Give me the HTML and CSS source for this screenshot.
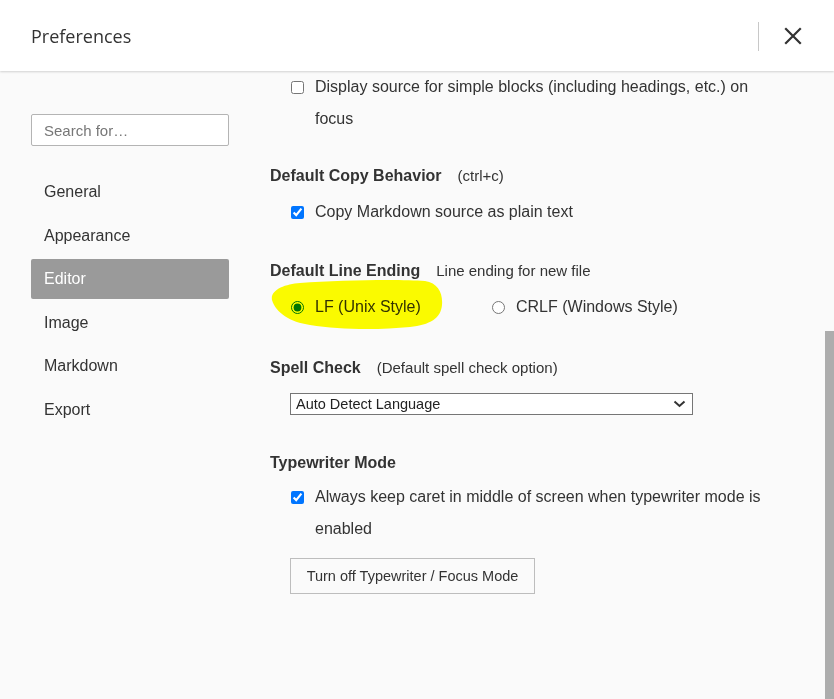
FILE: index.html
```html
<!DOCTYPE html>
<html lang="en">
<head>
<meta charset="utf-8">
<title>Preferences</title>
<link rel="stylesheet" href="styles.css">
</head>
<body>
<header class="topbar">
  <div class="title">Preferences</div>
  <div class="topbar-actions">
    <span class="divider"></span>
    <button class="close" aria-label="Close">
      <svg width="18" height="18" viewBox="0 0 18 18"><path d="M2 2 L16 16 M16 2 L2 16" stroke="#333" stroke-width="2.2" fill="none" stroke-linecap="square"/></svg>
    </button>
  </div>
</header>
<div class="main">
  <nav class="sidebar">
    <input class="search" type="text" placeholder="Search for…">
    <ul class="menu">
      <li class="menu-item">General</li>
      <li class="menu-item">Appearance</li>
      <li class="menu-item active">Editor</li>
      <li class="menu-item">Image</li>
      <li class="menu-item">Markdown</li>
      <li class="menu-item">Export</li>
    </ul>
  </nav>
  <div class="content">
    <div class="section first">
      <label class="row">
        <input type="checkbox" class="check">
        <span class="row-text">Display source for simple blocks (including headings, etc.) on focus</span>
      </label>
    </div>

    <div class="section section-sm">
      <div class="heading">Default Copy Behavior<span class="hint">(ctrl+c)</span></div>
      <label class="row">
        <input type="checkbox" class="check" checked>
        <span class="row-text">Copy Markdown source as plain text</span>
      </label>
    </div>

    <div class="section">
      <div class="heading">Default Line Ending<span class="hint">Line ending for new file</span></div>
      <div class="row radio-row">
        <label class="radio-label first-radio"><input type="radio" name="le" class="check" checked>LF (Unix Style)</label>
        <label class="radio-label"><input type="radio" name="le" class="check">CRLF (Windows Style)</label>
        <svg class="highlight" width="176" height="56" viewBox="0 0 176 56"><path d="M2 22 C0 12 15 6 30 5 C70 2 130 1 155 3 C168 5 173 15 172 27 C171 40 160 47 140 49 C110 52 70 52 40 47 C20 44 6 35 2 22 Z" fill="#ffff00"/></svg>
      </div>
    </div>

    <div class="section section-md">
      <div class="heading">Spell Check<span class="hint">(Default spell check option)</span></div>
      <div class="select">
        <span>Auto Detect Language</span>
        <svg width="13" height="8" viewBox="0 0 13 8"><path d="M1.5 1.5 L6.5 6 L11.5 1.5" stroke="#333" stroke-width="2" fill="none"/></svg>
      </div>
    </div>

    <div class="section section-lg">
      <div class="heading heading-tight">Typewriter Mode</div>
      <label class="row">
        <input type="checkbox" class="check" checked>
        <span class="row-text">Always keep caret in middle of screen when typewriter mode is enabled</span>
      </label>
      <button class="btn">Turn off Typewriter / Focus Mode</button>
    </div>
  </div>
  <div class="scrollbar"><div class="thumb"></div></div>
</div>
</body>
</html>
```

FILE: styles.css
```css
* { box-sizing: border-box; }
html, body { margin: 0; padding: 0; }
body {
  width: 834px;
  height: 699px;
  overflow: hidden;
  background: #fafafa;
  color: #333;
  font-family: "Liberation Sans", Arial, sans-serif;
  font-size: 16px;
}

.topbar {
  position: relative;
  z-index: 2;
  height: 71px;
  background: #fff;
  display: flex;
  align-items: center;
  padding-left: 31px;
  padding-right: 32px;
  box-shadow: 0 1px 2px rgba(0,0,0,0.16);
}
.title {
  font-family: "Open Sans", "Noto Sans", sans-serif;
  font-size: 18px;
  color: #333;
  margin-top: 1px;
}
.topbar-actions {
  margin-left: auto;
  display: flex;
  align-items: center;
}
.divider {
  width: 1px;
  height: 29px;
  background: #c8c8c8;
  margin-right: 25px;
  margin-top: 1px;
}
.close {
  border: 0;
  background: transparent;
  padding: 0;
  width: 18px;
  height: 18px;
  display: flex;
}

.main {
  display: flex;
  height: 628px;
}
.sidebar {
  width: 270px;
  flex: none;
  padding-left: 31px;
  padding-top: 43px;
}
.search {
  display: block;
  width: 198px;
  height: 32px;
  border: 1px solid #b4b4b4;
  border-radius: 2px;
  background: #fff;
  padding: 0 12px;
  font-family: "Liberation Sans", Arial, sans-serif;
  font-size: 15px;
  color: #333;
  outline: none;
}
.search::placeholder { color: #777; }
.menu {
  list-style: none;
  margin: 26px 0 0;
  padding: 0;
  width: 198px;
}
.menu-item {
  height: 40px;
  line-height: 40px;
  padding-left: 13px;
  margin-bottom: 3.6px;
  border-radius: 2px;
  color: #333;
  font-size: 16px;
}
.menu-item.active {
  background: #9a9a9a;
  color: #fff;
}

.content {
  flex: 1;
  padding-right: 40px;
}
.section { margin-top: 33px; }
.section.first { margin-top: 0; }
.section.section-sm { margin-top: 31px; }
.section.section-md { margin-top: 35px; }
.section.section-lg { margin-top: 38px; }

.heading {
  font-weight: bold;
  font-size: 16px;
  line-height: 20px;
  margin-bottom: 10px;
  display: flex;
  align-items: baseline;
}
.heading.heading-tight { margin-bottom: 8px; }
.hint {
  font-weight: normal;
  font-size: 15px;
  margin-left: 16px;
}

.row {
  display: flex;
  align-items: flex-start;
  padding-left: 21px;
  line-height: 32px;
  font-size: 16px;
  position: relative;
}
.check {
  width: 13px;
  height: 13px;
  margin: 10px 11px 0 0;
  flex: none;
}
.radio-row { align-items: center; }
.radio-label {
  display: flex;
  align-items: flex-start;
}
.first-radio { width: 201px; }
.highlight {
  position: absolute;
  left: 0;
  top: -13px;
  mix-blend-mode: multiply;
  pointer-events: none;
}

.select {
  margin: 15px 0 0 20px;
  width: 403px;
  height: 22px;
  border: 1px solid #767676;
  background: #fff;
  display: flex;
  align-items: center;
  justify-content: space-between;
  padding: 0 6px 0 5px;
  font-size: 14.5px;
  color: #222;
}

.btn {
  display: block;
  margin: 13px 0 0 20px;
  width: 245px;
  height: 36px;
  border: 1px solid #bdbdbd;
  background: #fafafa;
  font-family: "Liberation Sans", Arial, sans-serif;
  font-size: 14.5px;
  color: #333;
  padding: 0;
}

.scrollbar {
  width: 9px;
  flex: none;
  padding-top: 260px;
}
.thumb {
  height: 100%;
  background: #adadad;
}
```
